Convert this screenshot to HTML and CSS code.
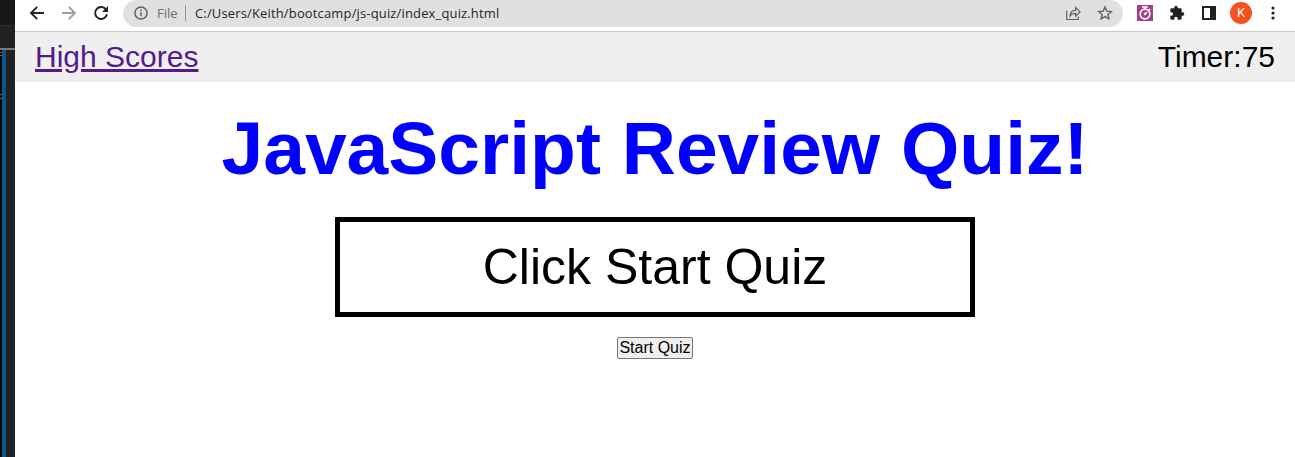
FILE: index.html
```html
<!DOCTYPE html>
<html lang="en">
<head>
<meta charset="utf-8">
<title>JavaScript Review Quiz</title>
<link rel="stylesheet" href="styles.css">
</head>
<body>
<aside class="editor"><div class="editor-top"></div><div class="editor-tab"></div><div class="editor-body"><div class="editor-edge"></div><div class="editor-blue"></div></div></aside>
<div class="browser">
  <div class="toolbar">
    <svg class="nav" width="110" height="27" viewBox="0 0 110 27" fill="none" stroke-width="1.9">
      <path d="M29 13H16M22.200 6.800 16 13l6.200 6.200" stroke="#202124"/>
      <path d="M47 13h13M53.800 6.800 60 13l-6.200 6.200" stroke="#9b9da0"/>
      <path d="M91 9.500A6 6 0 1 0 92 14.300" stroke="#202124"/>
      <path d="M93 6v6h-6z" fill="#202124"/>
    </svg>
    <div class="address">
      <svg class="info" width="14" height="14" viewBox="0 0 14 14" fill="none" stroke="#5f6368" stroke-width="1.500"><circle cx="7" cy="7" r="6.100"/><path d="M7 6.300v4M7 3.500v1.500"/></svg>
      <span class="scheme">File</span>
      <span class="divider"></span>
      <span class="url">C:/Users/Keith/bootcamp/js-quiz/index_quiz.html</span>
      <svg class="actions" width="48" height="18" viewBox="0 0 48 18" fill="none" stroke="#5f6368" stroke-width="1.200">
        <path d="M1.700 6.500v9h11.500v-3"/>
        <path d="M5 12c.4-3.700 2.600-5.700 5.600-5.700V3.500l4.500 4.400-4.500 4.200V9.400C8 9.400 6.300 10.200 5 12z"/>
        <path d="m40 3 1.800 4.100 4.500.4-3.400 3 1 4.400-3.900-2.300-3.900 2.300 1-4.400-3.400-3 4.500-.4z" stroke-width="1.400"/>
      </svg>
    </div>
    <div class="extensions">
      <svg width="16" height="16" viewBox="0 0 16 16"><path fill="#a33f87" d="M0 0h16v16H0z"/><g fill="none" stroke="#fff" stroke-width="1.700"><circle cx="8" cy="9" r="4.800"/><path d="M5 2h6M8 2v3M11.500 5.500 13 4M8 9l2-2"/></g><circle cx="8" cy="9" r="1.300" fill="#fff"/></svg>
      <svg width="16" height="16" viewBox="0 0 24 24" fill="#202124"><path d="M20.500 11H19V7c0-1.100-.9-2-2-2h-4V3.500a2.500 2.500 0 0 0-5 0V5H4c-1.100 0-2 .9-2 2v3.800h1.500a2.700 2.700 0 0 1 0 5.400H2V20c0 1.100.9 2 2 2h3.800v-1.500a2.700 2.700 0 0 1 5.400 0V22H17c1.100 0 2-.9 2-2v-4h1.500a2.500 2.500 0 0 0 0-5z"/></svg>
      <svg width="16" height="16" viewBox="0 0 16 16"><path fill="#202124" fill-rule="evenodd" d="M1 1h14v14H1zM3 3v10h6V3z"/></svg>
      <span class="avatar">K</span>
      <svg class="more" width="4" height="14" viewBox="0 0 4 14" fill="#202124"><circle cx="2" cy="2" r="1.600"/><circle cx="2" cy="7" r="1.600"/><circle cx="2" cy="12" r="1.600"/></svg>
    </div>
  </div>
  <header class="quiz-header"><a class="scores" href="#">High Scores</a><span>Timer:75</span></header>
  <main class="quiz">
    <h1 class="title">JavaScript Review Quiz!</h1>
    <div class="question">Click Start Quiz</div>
    <button class="start" type="button">Start Quiz</button>
  </main>
</div>
</body>
</html>
```
FILE: styles.css
```css
* { box-sizing: border-box; }
body { margin: 0; display: flex; height: 457px; overflow: hidden; background: #fff; font-family: "Liberation Sans", Arial, sans-serif; }
.editor { width: 15px; flex: none; display: flex; flex-direction: column; background: #202020; }
.editor-top { height: 25px; background: #181818; }
.editor-tab { height: 23px; border-top: 1px solid #2b2b2b; }
.editor-body { flex: 1; display: flex; border-top: 2px solid #77797a; }
.editor-edge { width: 2px; background: linear-gradient(#08090a 2px, #626466 2px 3px, #08090a 3px 5px, #626466 5px 6px, #08090a 6px 44px, #626466 44px 45px, #08090a 45px 48px, #626466 48px 49px, #08090a 49px); }
.editor-blue { width: 4px; background: #0e558e; }
.browser { flex: 1; min-width: 0; }
.toolbar { height: 32px; display: flex; align-items: flex-start; border-bottom: 1px solid #c8cacb; }
.nav { flex: none; margin-right: -2px; }
.address { width: 1000px; height: 27px; flex: none; display: flex; align-items: center; padding: 0 0 1px 11px; background: #e0e0e0; border-radius: 13.5px; font: 13px/20px "Open Sans", sans-serif; }
.info { flex: none; }
.scheme { width: 20px; margin-left: 9px; color: #6a6d71; }
.divider { width: 1px; height: 16px; margin: 0 9px 0 8px; background: #929496; }
.url { color: #25272a; letter-spacing: .15px; white-space: nowrap; }
.actions { margin-left: auto; margin-right: 10px; }
.extensions { height: 26px; display: flex; align-items: center; padding-left: 14px; gap: 16px; }
.avatar { width: 22px; height: 22px; margin-left: -3px; border-radius: 50%; background: #f4511e; color: #fff; font: 13px/22px Roboto, sans-serif; text-align: center; }
.more { margin-left: 3px; }
.quiz-header { height: 50px; padding: 0 20px; display: flex; justify-content: space-between; align-items: center; background: #efefef; font-size: 30px; line-height: 34px; }
.scores { color: #551a8b; text-decoration-thickness: 3px; }
.quiz { display: flex; flex-direction: column; align-items: center; }
.title { margin: 23px 0 26px; color: #00f; font-size: 75px; line-height: 86px; white-space: nowrap; }
.question { width: 640px; height: 100px; border: 5px solid #000; font-size: 50px; line-height: 90px; text-align: center; }
.start { width: 76px; height: 22px; margin-top: 20px; padding: 0; border: 1px solid #767676; border-radius: 2px; background: #efefef; color: #000; font: 16px/20px "Liberation Sans", Arial, sans-serif; white-space: nowrap; }
```
